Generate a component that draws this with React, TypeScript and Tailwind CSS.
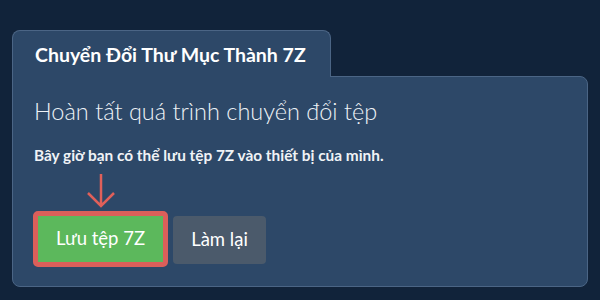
export default function App() {
	return (
		<div className="w-[600px] h-[300px] bg-[#11233a] px-[12px] pt-[30px] font-['Lato',sans-serif]">
			<div className="relative z-10 -mb-px w-[319px] h-[47px] rounded-t-lg border border-b-0 border-[#4b6585] bg-[#2d4868] pl-[22px] flex items-center">
				<h1 className="text-[19.5px] font-bold text-white leading-none pt-[2px]">
					Chuyển Đổi Thư Mục Thành 7Z
				</h1>
			</div>
			<div className="h-[211px] rounded-b-lg rounded-tr-lg border border-[#4b6585] bg-[#2d4868] pl-[20px] pt-[19px]">
				<h2 className="text-[23.5px] font-light text-[#eef2f6] leading-[30px] pl-px">
					Hoàn tất quá trình chuyển đổi tệp
				</h2>
				<p className="mt-[19px] text-[15.4px] font-bold text-[#f0f3f6] leading-[20px] pl-px">
					Bây giờ bạn có thể lưu tệp 7Z vào thiết bị của mình.
				</p>
				<div className="mt-[8px] flex items-end gap-[5px]">
					<div className="flex flex-col items-center">
						<svg width="30" height="36" viewBox="0 0 30 36" fill="none" className="mb-[2px]">
							<path d="M15 1V33M2 20L15 33L28 20" stroke="#e0605a" strokeWidth="2.5" />
						</svg>
						<div className="rounded-[5px] border-[5px] border-[#db5f5a]">
							<button className="block h-[46px] w-[125px] bg-[#5cb85c] text-[18.5px] text-white">
								Lưu tệp 7Z
							</button>
						</div>
					</div>
					<button className="mb-[3px] h-[48px] w-[93px] rounded-[4px] bg-[#4b5a6b] text-[18.5px] text-white">
						Làm lại
					</button>
				</div>
			</div>
		</div>
	)
}
